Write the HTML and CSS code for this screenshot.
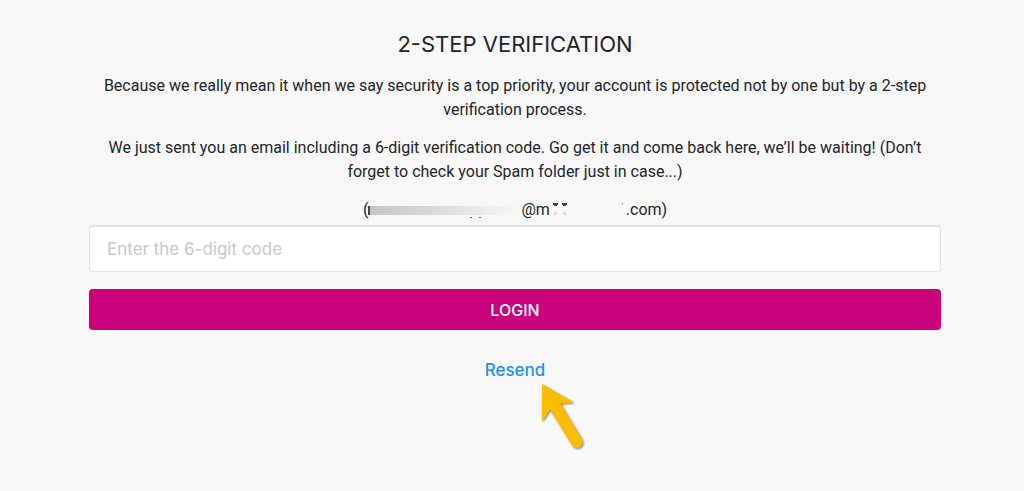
FILE: index.html
```html
<!DOCTYPE html>
<html lang="en">
<head>
    <meta charset="UTF-8">
    <meta name="viewport" content="width=device-width, initial-scale=1">
    <title>2-Step Verification</title>
    <link rel="stylesheet" href="styles.css">
</head>
<body>
<main class="verify">
    <h1>2-STEP VERIFICATION</h1>
    <p>Because we really mean it when we say security is a top priority, your account is protected not by one but by a <span class="nowrap">2-step</span> verification process.</p>
    <p>We just sent you an email including a 6-digit verification code. Go get it and come back here, we’ll be waiting! (Don’t forget to check your Spam folder just in case...)</p>
    <div class="email">
        <span>(</span>
        <svg class="maskName" width="153" height="16" viewBox="0 0 153 16" aria-hidden="true">
            <defs>
                <linearGradient id="fade">
                    <stop offset="0" stop-color="#c4c4c4"/>
                    <stop offset="0.4" stop-color="#d8d8d8"/>
                    <stop offset="1" stop-color="#f8f8f8"/>
                </linearGradient>
            </defs>
            <rect x="1" y="4" width="152" height="9" fill="url(#fade)"/>
            <rect x="0" y="4" width="2" height="9" fill="#444"/>
            <path d="M102 15h2v1h-2zM111 15h2v1h-2z" fill="#666"/>
        </svg>
        <span>@m</span>
        <svg class="maskDomain" width="76" height="16" viewBox="0 0 76 16" aria-hidden="true">
            <path d="M3 1h5v2h-1v1h-3v-1h-1zM12 1h5v2h-1v1h-3v-1h-1z" fill="#444"/>
            <path d="M4 10h3v3h-3zM13 10h3v3h-3z" fill="#dcdcdc"/>
            <path d="M72 1h1v1h-1z" fill="#777"/>
        </svg>
        <span>.com)</span>
    </div>
    <form>
        <input type="text" class="tbxCode" placeholder="Enter the 6-digit code" aria-label="6-digit code" inputmode="numeric" maxlength="6">
        <button type="submit" class="btnLogin">LOGIN</button>
    </form>
    <div class="resend">
        <a href="#">Resend</a>
        <svg class="pointer" width="48" height="68" viewBox="0 0 48 68" aria-hidden="true">
            <path d="M2 2L34 20.500L20.500 21.500L42 57.500A5.500 5.500 0 0 1 32 63L10 27.500L2 39.500Z"/>
        </svg>
    </div>
</main>
</body>
</html>
```
FILE: styles.css
```css
*{
    box-sizing: border-box;
}
body{
    margin: 0;
    background-color: #f8f8f8;
    color: #212529;
    font-family: Roboto,"Liberation Sans",sans-serif;
    font-size: 16px;
    line-height: 24px;
}
.verify{
    min-height: 100vh;
    padding: 30px 83px 40px 89px;
    text-align: center;
}
h1{
    margin: 0 0 16px;
    font-family: Inter,sans-serif;
    font-size: 22px;
    font-weight: 400;
    line-height: 28px;
}
p{
    margin: 0 0 14px;
    padding: 0 10px;
}
.nowrap{
    white-space: nowrap;
}
.email{
    display: flex;
    justify-content: center;
    align-items: center;
    margin-bottom: 3px;
}
.tbxCode{
    display: block;
    width: 100%;
    height: 47px;
    margin-bottom: 17px;
    padding: 0 17px;
    border: 1px solid #e2e2e2;
    border-top-width: 2px;
    border-radius: 4px;
    background-color: white;
    color: #212529;
    font-family: Inter,sans-serif;
    font-size: 17px;
}
.tbxCode::placeholder{
    color: #c8c8c8;
    opacity: 1;
}
.btnLogin{
    display: block;
    width: 100%;
    height: 41px;
    border: 0;
    border-radius: 4px;
    background-color: #ca007c;
    color: white;
    font-family: Inter,sans-serif;
    font-size: 16px;
    font-weight: 500;
    cursor: pointer;
}
.resend{
    position: relative;
    margin-top: 28px;
}
.resend a{
    color: #1e90ff;
    font-family: Inter,sans-serif;
    font-size: 17px;
    font-weight: 500;
    text-decoration: none;
}
/* the arrow hangs over the page, tip at the end of the link */
.pointer{
    position: absolute;
    top: 24px;
    left: calc(50% + 25px);
    overflow: visible;
    fill: #fbbc04;
    filter: drop-shadow(1px 1px 1px rgba(0,0,0,.5));
}
```
